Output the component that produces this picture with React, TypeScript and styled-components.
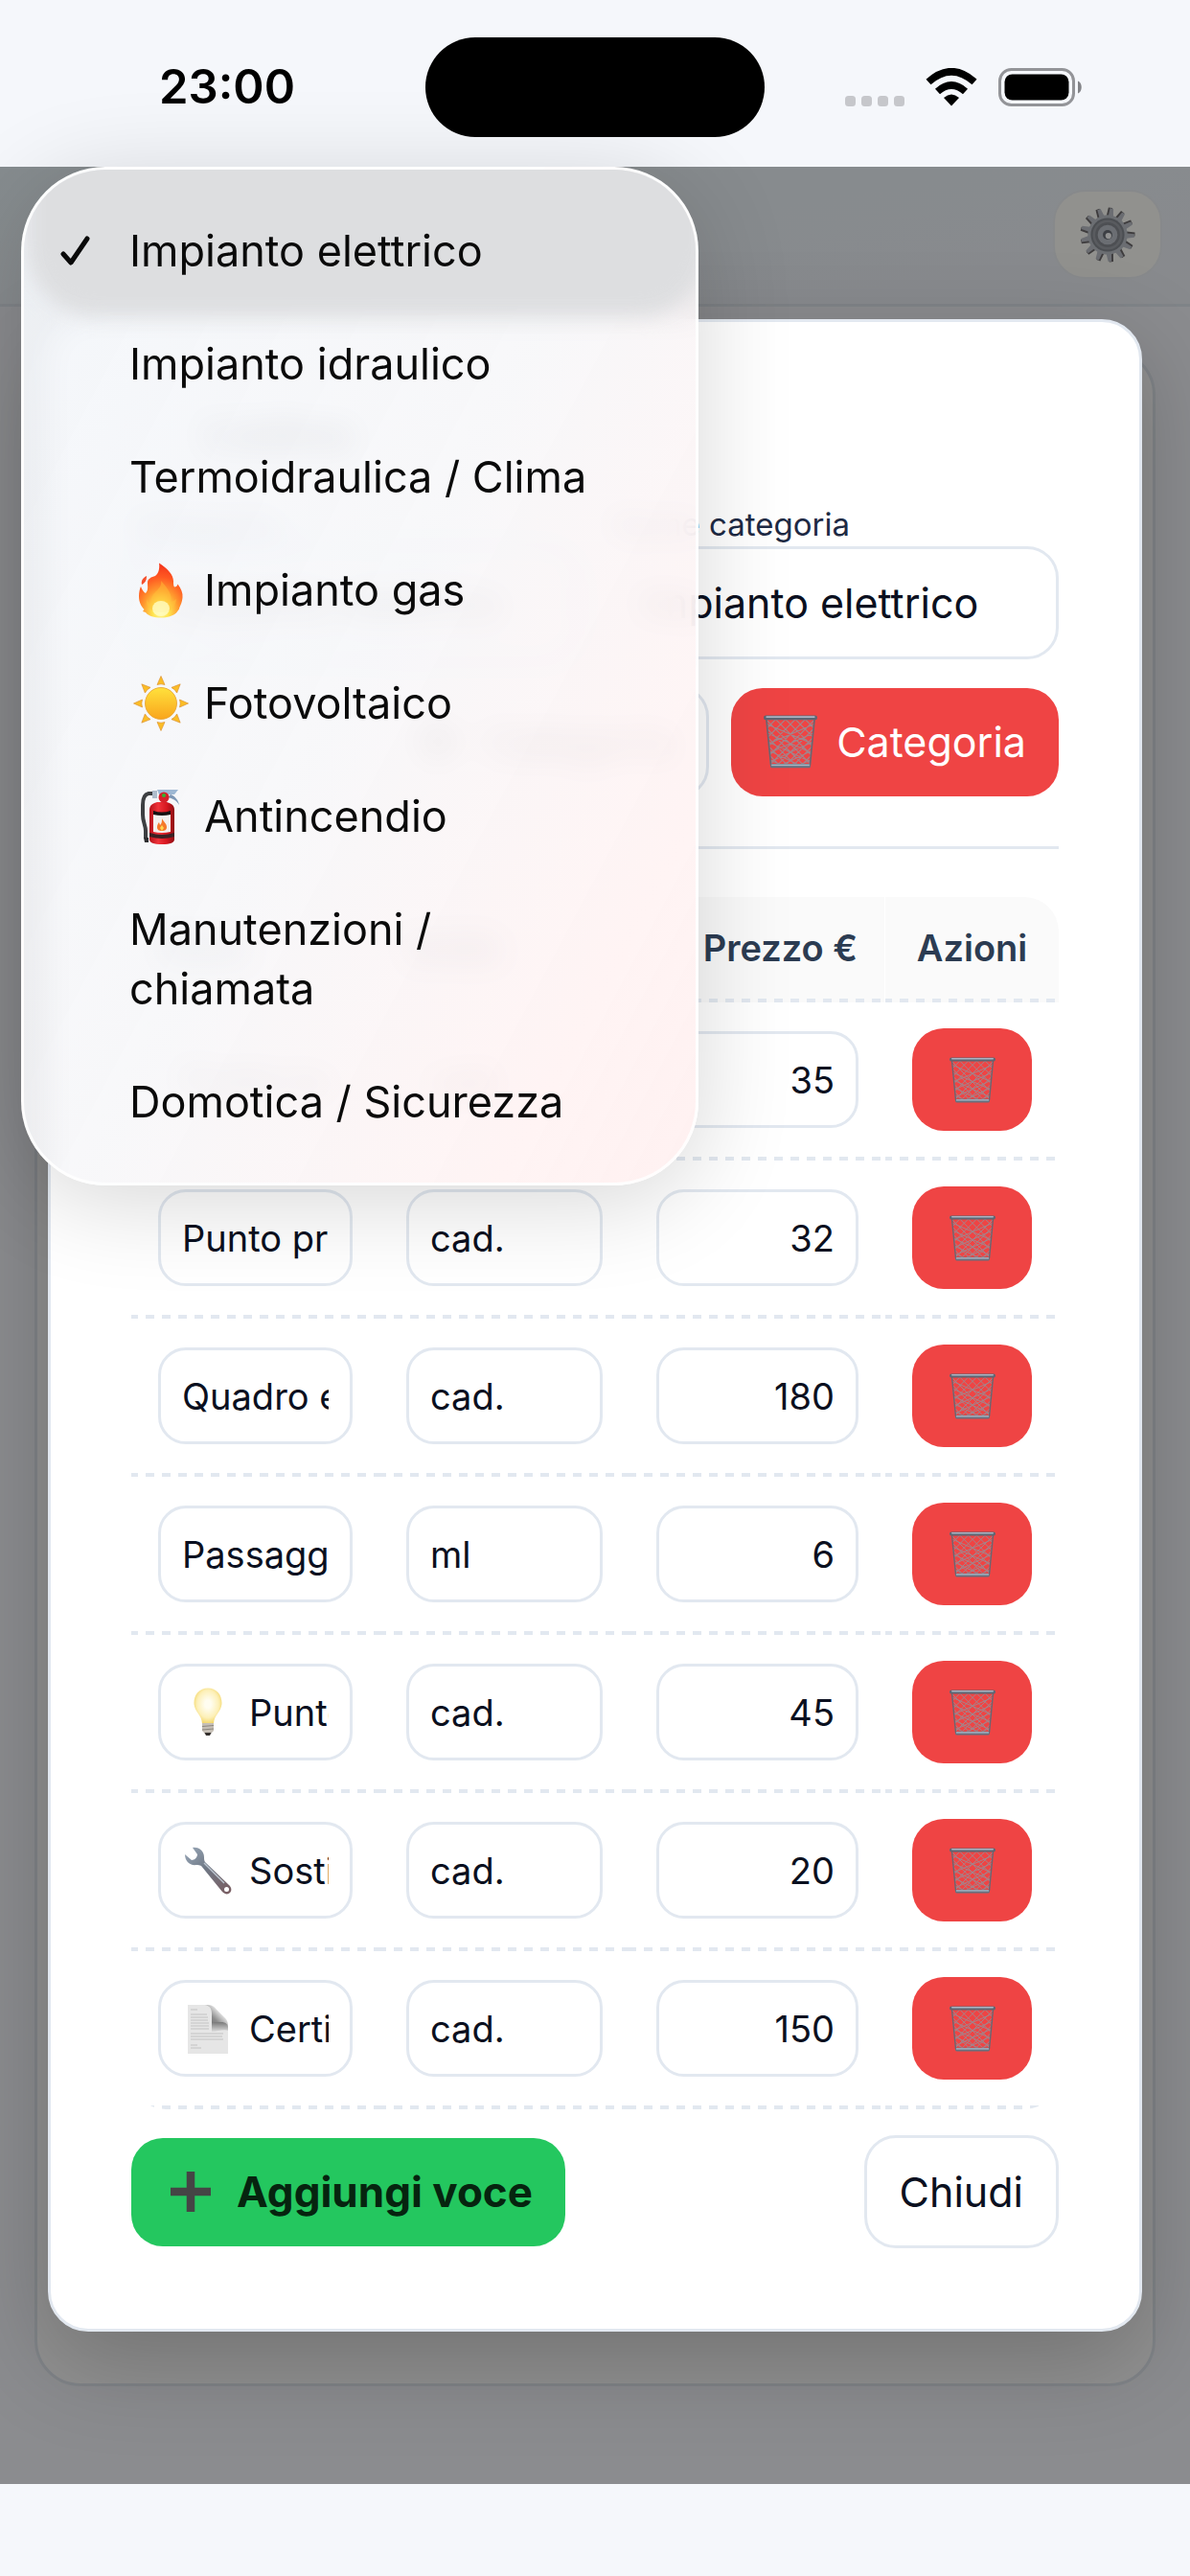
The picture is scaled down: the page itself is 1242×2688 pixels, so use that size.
import React, { useState } from 'react'
import styled, { createGlobalStyle } from 'styled-components'

const GlobalStyle = createGlobalStyle`
  * {
    box-sizing: border-box;
  }

  body {
    margin: 0;
    background: #f5f7fb;
    color: #0b1020;
    font-family: Inter, 'Liberation Sans', sans-serif;
  }

  button,
  input,
  select {
    font: inherit;
    color: inherit;
    margin: 0;
  }

  svg {
    display: block;
    flex: none;
  }
`

const Page = styled.div`
  position: relative;
  display: flex;
  flex-direction: column;
  min-height: 100vh;
`

const StatusBar = styled.div`
  display: grid;
  grid-template-columns: 1fr auto 1fr;
  align-items: center;
  height: 174px;
  padding: 8px 112px 0 166px;
`

const Time = styled.div`
  position: relative;
  font-size: 49px;
  line-height: 56px;
  font-weight: 600;
  color: #000;
  z-index: 3;
`

const Island = styled.div`
  width: 354px;
  height: 104px;
  margin-left: -54px;
  border-radius: 52px;
  background: #000;
  z-index: 3;
`

const Signals = styled.div`
  display: flex;
  justify-content: flex-end;
  align-items: center;
  gap: 22px;
`

const AppArea = styled.div`
  flex: 1;
  display: grid;
  grid-template-columns: minmax(0, 1fr);
`

const Backdrop = styled.div`
  grid-area: 1 / 1;
  display: flex;
  flex-direction: column;
`

const AppHeader = styled.header`
  display: flex;
  align-items: center;
  justify-content: flex-end;
  height: 146px;
  padding: 0 29px 2px;
  border-bottom: 3px solid #e2e8f0;
  background: linear-gradient(170deg, #ecf7fb, #f0f2f8);
`

const GearButton = styled.button`
  display: flex;
  align-items: center;
  justify-content: center;
  width: 114px;
  height: 93px;
  padding: 0;
  border: 2px solid #eef1f5;
  border-radius: 34px;
  background: #fffffa;
`

const AppCard = styled.main`
  flex: 1;
  margin: 44px 36px 102px;
  border: 3px solid #e2e8f0;
  border-radius: 48px;
  background: #fff;
`

const Overlay = styled.div`
  grid-area: 1 / 1;
  padding: 159px 50px;
  background: rgba(0, 0, 0, 0.43);
  z-index: 1;
`

const Modal = styled.section`
  padding: 84px;
  border: 3px solid #e2e8f0;
  border-radius: 42px;
  background: #fff;
  box-shadow: 0 30px 100px rgba(0, 0, 0, 0.22);
`

const Title = styled.h2`
  margin: 0 0 38px;
  padding-left: 75px;
  font-size: 48px;
  line-height: 66px;
  font-weight: 700;
`

const FormGrid = styled.div`
  display: grid;
  grid-template-columns: 1fr 1fr;
  gap: 34px;
`

const Label = styled.label`
  display: block;
  font-size: 33px;
  line-height: 46px;
  color: #1e2a44;
`

const NameInput = styled.input`
  display: block;
  width: 100%;
  height: 118px;
  padding: 0 28px;
  border: 3px solid #e2e8f0;
  border-radius: 33px;
  background: #fff;
  font-size: 43px;
`

const CategorySelect = styled.select`
  display: block;
  width: 100%;
  height: 118px;
  padding: 0 28px;
  border: 3px solid #93b4f5;
  border-radius: 33px;
  background: #fff;
  box-shadow: 0 0 0 9px #dbe8fd;
  font-size: 43px;
`

const Actions = styled.div<{ $spread?: boolean }>`
  display: flex;
  align-items: center;
  justify-content: ${({ $spread }) => ($spread ? 'space-between' : 'flex-end')};
  gap: 23px;
  margin-top: 27px;
`

const Button = styled.button<{ $kind: 'ghost' | 'danger' | 'success' }>`
  display: flex;
  align-items: center;
  gap: 20px;
  height: ${({ $kind }) => ($kind === 'ghost' ? 118 : 113)}px;
  padding: 0 34px;
  border: ${({ $kind }) => ($kind === 'ghost' ? '3px solid #e2e8f0' : 'none')};
  border-radius: 33px;
  background: ${({ $kind }) =>
    ({ ghost: '#fff', danger: '#ef4444', success: '#24c75f' })[$kind]};
  color: ${({ $kind }) =>
    ({ ghost: '#0b1020', danger: '#fff', success: '#06240f' })[$kind]};
  font-size: ${({ $kind }) => ($kind === 'success' ? 44 : 43)}px;
  font-weight: ${({ $kind }) => ($kind === 'success' ? 700 : 400)};
  white-space: nowrap;
`

const Divider = styled.hr`
  height: 3px;
  margin: 50px 0;
  border: 0;
  background: #e2e8f0;
`

const TableWrap = styled.div`
  overflow: hidden;
  border-radius: 36px;
`

const Table = styled.table`
  width: 100%;
  table-layout: fixed;
  border-collapse: separate;
  border-spacing: 0;
`

const dashes =
  'repeating-linear-gradient(90deg, #e2e8f0 0 7px, transparent 7px 15px, #e2e8f0 15px 17px) left bottom / 100% 4px no-repeat'

const HeadCell = styled.th<{ $align?: string }>`
  height: 110px;
  padding: 0 28px 4px;
  border-right: 1px solid #fff;
  background: ${dashes}, #fafafa;
  font-size: 38px;
  font-weight: 600;
  color: #2c3c52;
  text-align: ${({ $align }) => $align || 'left'};
  white-space: nowrap;

  &:last-child {
    border-right: 0;
  }
`

const Cell = styled.td`
  height: 165px;
  padding: 27px 28px 31px;
  background: ${dashes};
`

const Field = styled.div`
  display: flex;
  align-items: center;
  gap: 16px;
  height: 101px;
  padding: 0 22px;
  border: 3px solid #e2e8f0;
  border-radius: 29px;
  background: #fff;
`

const FieldInput = styled.input<{ $right?: boolean }>`
  flex: 1;
  min-width: 0;
  width: 100%;
  padding: 0;
  border: 0;
  outline: 0;
  background: transparent;
  font-size: 38px;
  text-align: ${({ $right }) => ($right ? 'right' : 'left')};
`

const DeleteButton = styled.button`
  display: flex;
  align-items: center;
  justify-content: center;
  width: 100%;
  height: 107px;
  padding: 0;
  border: 0;
  border-radius: 33px;
  background: #ef4444;
`

const BottomBar = styled.div`
  height: 97px;
`

const Menu = styled.ul`
  position: absolute;
  top: 174px;
  left: 22px;
  width: 707px;
  margin: 0;
  padding: 26px 0 25px;
  overflow: hidden;
  list-style: none;
  border: 3px solid rgba(255, 255, 255, 0.85);
  border-radius: 88px;
  background: linear-gradient(
    118deg,
    rgba(243, 246, 250, 0.94) 0%,
    rgba(247, 247, 249, 0.91) 50%,
    rgba(255, 243, 243, 0.92) 84%,
    rgba(255, 240, 240, 0.95) 100%
  );
  backdrop-filter: blur(16px);
  box-shadow: 0 16px 100px rgba(0, 0, 0, 0.16);
  z-index: 2;
`

const MenuItem = styled.button<{ $active: boolean }>`
  position: relative;
  display: flex;
  align-items: center;
  width: 100%;
  padding: 28px 104px 28px 38px;
  border: 0;
  background: none;
  color: #0a0a0a;
  font-size: 45px;
  line-height: 62px;
  text-align: left;

  &::before {
    content: '';
    display: ${({ $active }) => ($active ? 'block' : 'none')};
    position: absolute;
    inset: -50px -12px -8px 4px;
    border-radius: 0 0 70px 70px;
    background: #dddee0;
    filter: blur(10px);
  }
`

const CheckSlot = styled.span`
  position: relative;
  flex: none;
  width: 72px;
`

const IconSlot = styled.span`
  flex: none;
  display: flex;
  justify-content: center;
  width: 66px;
  margin-right: 12px;
`

const ItemText = styled.span`
  position: relative;
`

// Wire basket: two sets of crossing wires inside a tapered outline
const Basket = ({ size = 48 }: { size?: number }) => {
  const at = (u: number, v: number) =>
    `${2 + 4 * v + u * (44 - 8 * v)} ${4 + 40 * v}`
  const lines: string[] = []
  for (let k = -4; k < 5; k++) {
    const u = k / 5
    const start = Math.max(0, -u)
    const end = Math.min(1, 1 - u)
    lines.push(`M${at(u + start, start)}L${at(u + end, end)}`)
    lines.push(`M${at(1 - u - start, start)}L${at(1 - u - end, end)}`)
  }
  for (let k = 0; k < 5; k++) {
    const v = 0.1 + k * 0.2
    const drop = Math.min(0.45, 1 - v)
    const u = drop / 0.45
    lines.push(`M${at(0, v)}L${at(u, v + drop)}`)
    lines.push(`M${at(1, v)}L${at(1 - u, v + drop)}`)
  }
  return (
    <svg width={size} height={size} viewBox="0 0 48 48" aria-hidden="true">
      <path d={lines.join('')} stroke="#a3848b" strokeWidth="1" fill="none" />
      <path d="M2.5 4L6.5 45M45.5 4L41.5 45" stroke="#6b6570" strokeWidth="1.4" />
      <rect x="6" y="43.8" width="36" height="3.6" rx="1.6" fill="#66707e" />
      <rect x="7" y="44.2" width="34" height="1.4" fill="#a9b4c2" />
      <rect x="0" y="0.5" width="48" height="4" rx="2" fill="#5d6673" />
      <rect x="2" y="1" width="44" height="1.6" rx="0.8" fill="#aab4c3" />
    </svg>
  )
}

const Gear = () => (
  <svg width="60" height="60" viewBox="-29 -29 58 58" aria-hidden="true">
    {Array.from({ length: 13 }, (_, i) => (
      <g key={i} transform={`rotate(${(i * 360) / 13 + 8})`}>
        <path d="M-4-17l1-10.500h4l2 10.500z" fill="#6d6a6c" />
        <path d="M-2-17l.7-10h3.400l1.400 10z" fill="#bcc0c8" />
      </g>
    ))}
    <circle r="20" fill="#bcc1c9" />
    <circle r="17" fill="#858990" />
    <circle r="15" fill="#9da1a8" />
    <circle r="12.500" fill="#888c93" />
    <circle r="10" fill="#bdc2ca" />
    <circle r="4.800" fill="#6b7078" />
    <circle cx="0.800" cy="1" r="3" fill="#fff" />
  </svg>
)

const Flame = () => (
  <svg width="58" height="58" viewBox="0 0 58 58" aria-hidden="true">
    <defs>
      <radialGradient id="flame" cx="0.5" cy="0.9" r="0.85">
        <stop offset="0" stopColor="#fff9a0" />
        <stop offset="0.22" stopColor="#ffe34d" />
        <stop offset="0.48" stopColor="#ff9a2e" />
        <stop offset="0.75" stopColor="#ff5a22" />
        <stop offset="1" stopColor="#f5391c" />
      </radialGradient>
    </defs>
    <path
      d="M27 0.500c9 6 15 12 15 19 0 3 0 5 1 6 2 0 3-1 3.500-3 3.500 5 5.500 9 5 14-.5 6-3 9-3.500 12l-3 4C41 56 36 57.500 29 57.500S16 56 13 52l-3-1 1.500-2C8 45 6 41 6 35c0-4 1-8 2-10 1 3 3 6 5 7 3-3 2-7 2-11 0-4 4-6 8-7 3-2 5-7 4-13.500z"
      fill="url(#flame)"
    />
    <path d="M14 14c0 4-1 7-5 9-1-4 1-7 5-9z" fill="#f5502c" />
    <path
      d="M29 19c1 5-2 8-6 12-4 4-5 8-4 13-2-1-4-3-5-6-1 7 4 14 15 14s15-6 16-14c-2 2-4 3-6 3 2-6-1-12-10-22z"
      fill="#ffc43a"
      opacity="0.45"
    />
    <ellipse cx="29" cy="48" rx="9" ry="8" fill="#fffdc4" opacity="0.8" />
  </svg>
)

const Sun = () => (
  <svg width="58" height="58" viewBox="-29 -29 58 58" aria-hidden="true">
    <defs>
      <linearGradient id="sun" x1="0" y1="0" x2="0" y2="1">
        <stop offset="0" stopColor="#ffe13c" />
        <stop offset="1" stopColor="#f9a51c" />
      </linearGradient>
    </defs>
    {Array.from({ length: 8 }, (_, i) => (
      <path
        key={i}
        d="M0-28.500l4 9q-4-1.500-8 0z"
        fill="#fbbd25"
        stroke="#dd9436"
        strokeWidth="0.700"
        transform={`rotate(${i * 45})`}
      />
    ))}
    <circle r="16.500" fill="url(#sun)" stroke="#e9a12a" strokeWidth="0.800" />
  </svg>
)

const Extinguisher = () => (
  <svg width="58" height="58" viewBox="0 0 58 58" aria-hidden="true">
    <defs>
      <linearGradient id="tank">
        <stop offset="0" stopColor="#b5121a" />
        <stop offset="0.35" stopColor="#f0333a" />
        <stop offset="0.7" stopColor="#d5161f" />
        <stop offset="1" stopColor="#8d0d13" />
      </linearGradient>
    </defs>
    <path
      d="M22 5h-6c-5 1-6 6-6 12v10c0 8 3 11 3 17v8"
      stroke="#3d3f42"
      strokeWidth="4"
      fill="none"
    />
    <path d="M11 51h5v5h-4z" fill="#2d2e30" />
    <path d="M25 1h22l-4 5H27z" fill="#9db7d3" />
    <path d="M39 6c5 2 8 6 9 11-3-5-7-7-12-8z" fill="#7d97b5" />
    <path d="M20 2h5v8h-5z" fill="#aebccb" />
    <path d="M17 22c0-5 4-7 8-8h10c4 1 8 3 8 8v31c0 3-4 5-13 5s-13-2-13-5z" fill="url(#tank)" />
    <circle cx="32" cy="9" r="5.500" fill="#d4202a" />
    <circle cx="32" cy="7" r="2" fill="#31b331" />
    <path d="M21 25q9 2 18 0v20q-9 2-18 0z" fill="#f4f1ee" />
    <path d="M21 23q9 3 18 0v4q-9 2-18 0z" fill="#151212" />
    <path d="M17 46q13 4 26 0v4q-13 4-26 0z" fill="#3a2224" />
    <path d="M30 31c1 3 5 5 5 9 0 3-2 4-5 4s-5-1-5-4c0-2 1-4 2-5l1 3c2-2 2-4 2-7z" fill="#f5792a" />
    <path d="M30 38l2 3-2 3-2-3z" fill="#ffd64d" />
  </svg>
)

const Bulb = () => (
  <svg width="54" height="54" viewBox="0 0 54 54" aria-hidden="true">
    <defs>
      <radialGradient id="bulb" cx="0.5" cy="0.45" r="0.55">
        <stop offset="0.2" stopColor="#fffdf0" />
        <stop offset="0.7" stopColor="#fdf0b8" />
        <stop offset="1" stopColor="#f3d76c" />
      </radialGradient>
    </defs>
    <path
      d="M27 1.500c9 0 14.500 7 14.500 15.500 0 9-8 12-8.500 21.500H21C20.500 29 12.500 26 12.500 17 12.500 8.500 18 1.500 27 1.500z"
      fill="url(#bulb)"
    />
    <path d="M21 38h12v8l-3 3h-6l-3-3z" fill="#c6bfb6" />
    <path d="M21 41.500l12-1M21 45l12-1" stroke="#8d867e" strokeWidth="1.200" />
    <path d="M23.500 48h7L29 51h-4z" fill="#34302d" />
  </svg>
)

const Wrench = () => (
  <svg width="54" height="54" viewBox="0 0 54 54" aria-hidden="true">
    <defs>
      <linearGradient id="wrench" x1="0" y1="0" x2="1" y2="1">
        <stop offset="0" stopColor="#9aa9ba" />
        <stop offset="0.45" stopColor="#6f7885" />
        <stop offset="1" stopColor="#7a5c60" />
      </linearGradient>
    </defs>
    <path
      d="M11 3c7-1 12 4 12 10 0 2 0 3 1 5l25 24c3 3 3 6 1 8s-5 2-8-1L20 22c-2-1-3-1-5-1C8 22 3 17 3 10l7 6c3 0 6-3 6-6z"
      fill="url(#wrench)"
    />
    <path d="M23 19l21 21" stroke="#bcc5cf" strokeWidth="1.500" />
    <circle cx="46.500" cy="46.500" r="2.500" fill="#fff" />
  </svg>
)

const Sheet = () => (
  <svg width="54" height="54" viewBox="0 0 54 54" aria-hidden="true">
    <defs>
      <linearGradient id="fold" x1="1" y1="0" x2="0" y2="1">
        <stop offset="0.3" stopColor="#ededed" />
        <stop offset="0.6" stopColor="#8c8c8c" />
        <stop offset="1" stopColor="#5d5d5d" />
      </linearGradient>
      <linearGradient id="shade" x1="0" y1="0" x2="0" y2="1">
        <stop offset="0" stopColor="#6e6e6e" />
        <stop offset="1" stopColor="#dcdcdc" />
      </linearGradient>
    </defs>
    <path d="M6 2h20c6 0 8 2 10 5l9 9c2 2 3 4 3 8v29H6z" fill="#e6e6e6" />
    <path
      d="M9 7h7M9 12h17M9 15h18M9 18h18M9 21h19M9 24h19M9 27h19M9 32h34M9 35h33M9 38h34M9 44h7M9 47h11"
      stroke="#c2c2c2"
      strokeWidth="1"
    />
    <path d="M31 19h10c4 0 7 2 7 6v4c-4-2-11 1-17 1z" fill="url(#shade)" />
    <path d="M24 2c5 1 7 4 7 9v9h10c4 0 7 2 7 6 0-6-1-8-4-11L34 5c-2-2-5-3-10-3z" fill="url(#fold)" />
  </svg>
)

const Plus = () => (
  <svg width="56" height="48" viewBox="0 0 56 48" aria-hidden="true">
    <path d="M28 3v42M7 24h42" stroke="#454545" strokeWidth="8.500" />
  </svg>
)

const Check = () => (
  <svg width="32" height="32" viewBox="0 0 32 32" aria-hidden="true">
    <path
      d="M3 19l8 9L28 3"
      fill="none"
      stroke="#0a0a0a"
      strokeWidth="5"
      strokeLinecap="round"
      strokeLinejoin="round"
    />
  </svg>
)

const Dots = () => (
  <svg width="62" height="40" viewBox="0 0 62 40" aria-hidden="true">
    {[0, 17, 34, 51].map(x => (
      <rect key={x} x={x} y="29" width="11" height="11" rx="3.500" fill="#c6c7cb" />
    ))}
  </svg>
)

const Wifi = () => (
  <svg width="54" height="40" viewBox="0 0 54 40" aria-hidden="true">
    <path d="M27 39.500l-8-8.500q8-7 16 0z" />
    <path d="M12.500 24.500q14.500-13 29 0" fill="none" stroke="#000" strokeWidth="7.500" />
    <path d="M3 14.500q24-21.500 48 0" fill="none" stroke="#000" strokeWidth="7.500" />
  </svg>
)

const Battery = () => (
  <svg width="88" height="40" viewBox="0 0 88 40" aria-hidden="true">
    <rect x="1.500" y="1.500" width="77" height="37" rx="12" fill="none" stroke="#939498" strokeWidth="3" />
    <rect x="6.500" y="6.500" width="67" height="27" rx="8" />
    <path d="M83 13.500c5 1.500 5 11.500 0 13z" fill="#828387" />
  </svg>
)

interface ICategory {
  name: string
  icon?: React.ReactNode
}

interface IEntry {
  name: string
  unit: string
  price: number
  icon?: React.ReactNode
}

const categories: ICategory[] = [
  { name: 'Impianto elettrico' },
  { name: 'Impianto idraulico' },
  { name: 'Termoidraulica / Clima' },
  { name: 'Impianto gas', icon: <Flame /> },
  { name: 'Fotovoltaico', icon: <Sun /> },
  { name: 'Antincendio', icon: <Extinguisher /> },
  { name: 'Manutenzioni / chiamata' },
  { name: 'Domotica / Sicurezza' },
]

const initialEntries: IEntry[] = [
  { name: 'Punto luce', unit: 'cad.', price: 35 },
  { name: 'Punto presa', unit: 'cad.', price: 32 },
  { name: 'Quadro elettrico', unit: 'cad.', price: 180 },
  { name: 'Passaggio cavi', unit: 'ml', price: 6 },
  { name: 'Punto luce', unit: 'cad.', price: 45, icon: <Bulb /> },
  { name: 'Sostituzione', unit: 'cad.', price: 20, icon: <Wrench /> },
  { name: 'Certificazione', unit: 'cad.', price: 150, icon: <Sheet /> },
]

const EntryRow: React.FC<{ entry: IEntry; onDelete: () => void }> = ({
  entry,
  onDelete,
}) => (
  <tr>
    <Cell>
      <Field>
        {entry.icon}
        <FieldInput aria-label="Voce" defaultValue={entry.name} />
      </Field>
    </Cell>
    <Cell>
      <Field>
        <FieldInput aria-label="Unità" defaultValue={entry.unit} />
      </Field>
    </Cell>
    <Cell>
      <Field>
        <FieldInput
          $right
          aria-label="Prezzo €"
          inputMode="decimal"
          defaultValue={entry.price}
        />
      </Field>
    </Cell>
    <Cell>
      <DeleteButton type="button" aria-label="Elimina" onClick={onDelete}>
        <Basket />
      </DeleteButton>
    </Cell>
  </tr>
)

const App: React.FC = () => {
  const [selected, setSelected] = useState(categories[0].name)
  const [entries, setEntries] = useState(initialEntries)

  return (
    <Page>
      <GlobalStyle />
      <StatusBar>
        <Time>23:00</Time>
        <Island />
        <Signals>
          <Dots />
          <Wifi />
          <Battery />
        </Signals>
      </StatusBar>

      <AppArea>
        <Backdrop>
          <AppHeader>
            <GearButton type="button" aria-label="Impostazioni">
              <Gear />
            </GearButton>
          </AppHeader>
          <AppCard />
        </Backdrop>

        <Overlay>
          <Modal role="dialog" aria-label="Listino">
            <Title>Listino</Title>
            <FormGrid>
              <div>
                <Label htmlFor="category">Categoria</Label>
                <CategorySelect
                  id="category"
                  value={selected}
                  onChange={e => setSelected(e.target.value)}
                >
                  {categories.map(({ name }) => (
                    <option key={name}>{name}</option>
                  ))}
                </CategorySelect>
              </div>
              <div>
                <Label htmlFor="category-name">Nome categoria</Label>
                <NameInput id="category-name" key={selected} defaultValue={selected} />
              </div>
            </FormGrid>
            <Actions>
              <Button type="button" $kind="ghost">
                <Plus />
                Categoria
              </Button>
              <Button type="button" $kind="danger">
                <Basket size={56} />
                Categoria
              </Button>
            </Actions>
            <Divider />
            <TableWrap>
              <Table>
                <colgroup>
                  <col width="259" />
                  <col width="261" />
                  <col width="267" />
                  <col width="181" />
                </colgroup>
                <thead>
                  <tr>
                    <HeadCell>Voce</HeadCell>
                    <HeadCell>Unità</HeadCell>
                    <HeadCell $align="right">Prezzo €</HeadCell>
                    <HeadCell $align="center">Azioni</HeadCell>
                  </tr>
                </thead>
                <tbody>
                  {entries.map(entry => (
                    <EntryRow
                      key={entry.price}
                      entry={entry}
                      onDelete={() => setEntries(entries.filter(e => e !== entry))}
                    />
                  ))}
                </tbody>
              </Table>
            </TableWrap>
            <Actions $spread>
              <Button type="button" $kind="success">
                <Plus />
                Aggiungi voce
              </Button>
              <Button type="button" $kind="ghost">
                Chiudi
              </Button>
            </Actions>
          </Modal>
        </Overlay>
      </AppArea>
      <BottomBar />

      <Menu aria-label="Categoria">
        {categories.map(({ name, icon }) => (
          <li key={name}>
            <MenuItem
              type="button"
              $active={name === selected}
              onClick={() => setSelected(name)}
            >
              <CheckSlot>{name === selected && <Check />}</CheckSlot>
              {icon && <IconSlot>{icon}</IconSlot>}
              <ItemText>{name}</ItemText>
            </MenuItem>
          </li>
        ))}
      </Menu>
    </Page>
  )
}

export default App
